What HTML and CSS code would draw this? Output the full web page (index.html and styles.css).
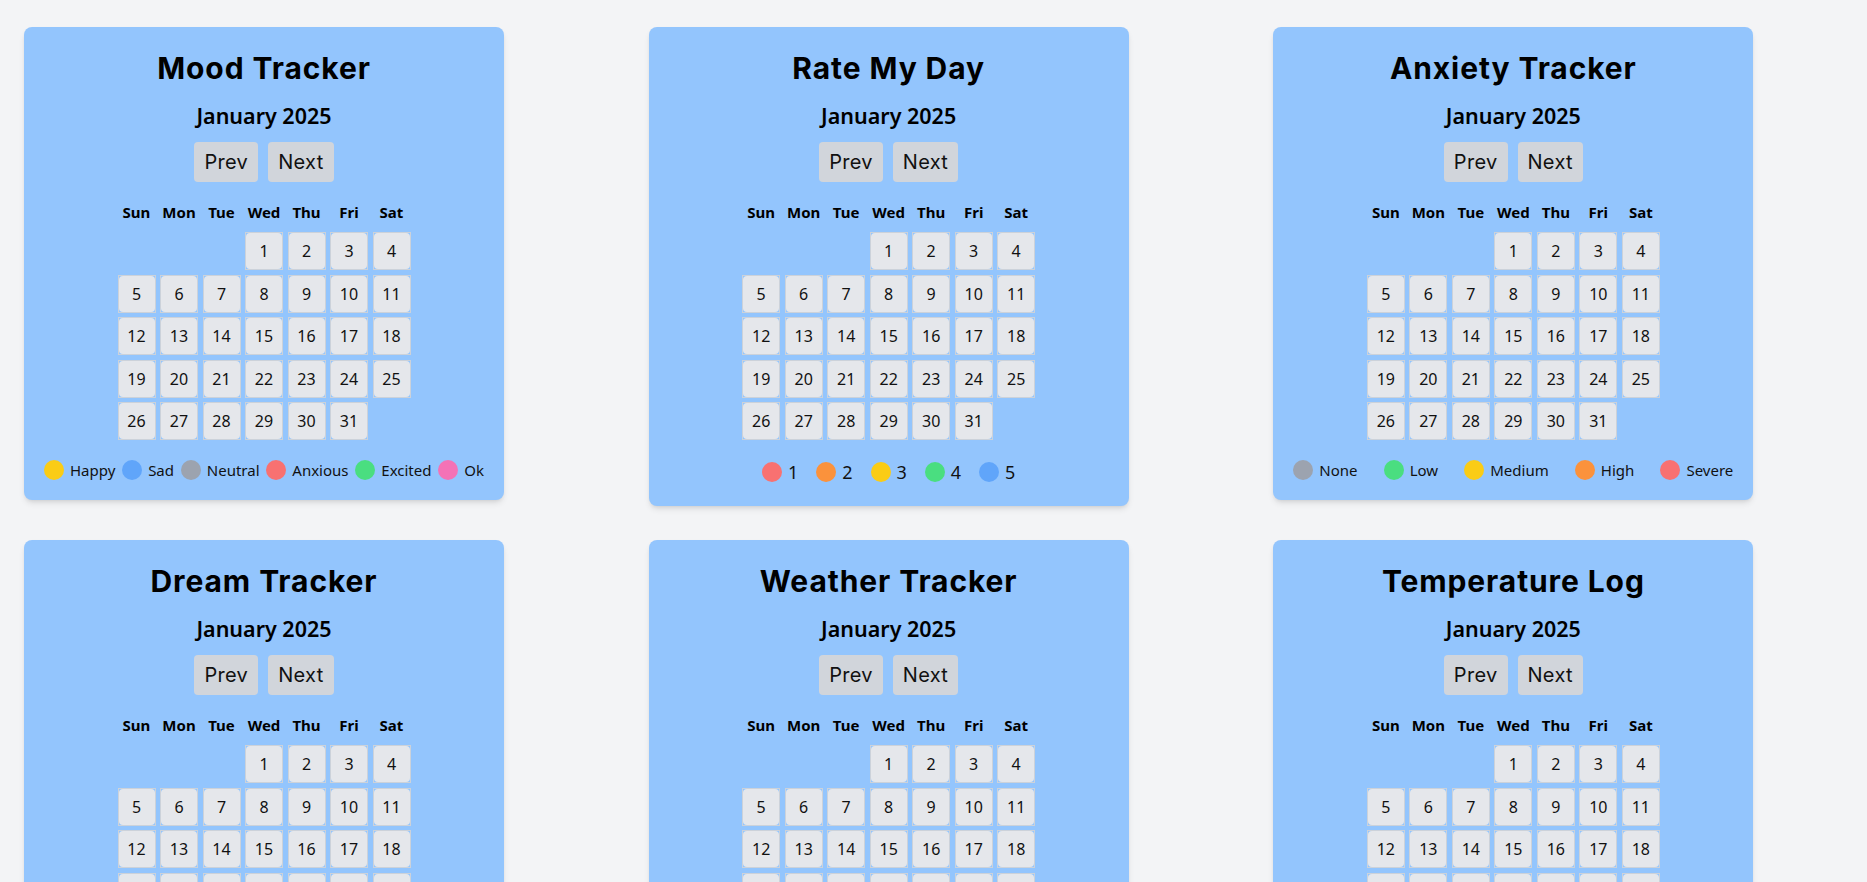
FILE: index.html
```html
<!DOCTYPE html>
<html lang="en">
<head>
<meta charset="utf-8">
<title>Trackers</title>
<link rel="stylesheet" href="styles.css">
</head>
<body>
<main class="board">

  <section class="card">
    <h1 class="card-title">Mood Tracker</h1>
    <h2 class="month">January 2025</h2>
    <div class="nav"><button class="nav-btn">Prev</button><button class="nav-btn">Next</button></div>
    <div class="weekdays"><span>Sun</span><span>Mon</span><span>Tue</span><span>Wed</span><span>Thu</span><span>Fri</span><span>Sat</span></div>
    <div class="days">
      <i class="blank"></i><i class="blank"></i><i class="blank"></i>
      <div class="day"><span>1</span></div><div class="day"><span>2</span></div><div class="day"><span>3</span></div><div class="day"><span>4</span></div>
      <div class="day"><span>5</span></div><div class="day"><span>6</span></div><div class="day"><span>7</span></div><div class="day"><span>8</span></div><div class="day"><span>9</span></div><div class="day"><span>10</span></div><div class="day"><span>11</span></div>
      <div class="day"><span>12</span></div><div class="day"><span>13</span></div><div class="day"><span>14</span></div><div class="day"><span>15</span></div><div class="day"><span>16</span></div><div class="day"><span>17</span></div><div class="day"><span>18</span></div>
      <div class="day"><span>19</span></div><div class="day"><span>20</span></div><div class="day"><span>21</span></div><div class="day"><span>22</span></div><div class="day"><span>23</span></div><div class="day"><span>24</span></div><div class="day"><span>25</span></div>
      <div class="day"><span>26</span></div><div class="day"><span>27</span></div><div class="day"><span>28</span></div><div class="day"><span>29</span></div><div class="day"><span>30</span></div><div class="day"><span>31</span></div>
    </div>
    <div class="legend legend-spread">
      <div class="key"><i class="dot yellow"></i>Happy</div>
      <div class="key"><i class="dot blue"></i>Sad</div>
      <div class="key"><i class="dot gray"></i>Neutral</div>
      <div class="key"><i class="dot red"></i>Anxious</div>
      <div class="key"><i class="dot green"></i>Excited</div>
      <div class="key"><i class="dot pink"></i>Ok</div>
    </div>
  </section>

  <section class="card">
    <h1 class="card-title">Rate My Day</h1>
    <h2 class="month">January 2025</h2>
    <div class="nav"><button class="nav-btn">Prev</button><button class="nav-btn">Next</button></div>
    <div class="weekdays"><span>Sun</span><span>Mon</span><span>Tue</span><span>Wed</span><span>Thu</span><span>Fri</span><span>Sat</span></div>
    <div class="days">
      <i class="blank"></i><i class="blank"></i><i class="blank"></i>
      <div class="day"><span>1</span></div><div class="day"><span>2</span></div><div class="day"><span>3</span></div><div class="day"><span>4</span></div>
      <div class="day"><span>5</span></div><div class="day"><span>6</span></div><div class="day"><span>7</span></div><div class="day"><span>8</span></div><div class="day"><span>9</span></div><div class="day"><span>10</span></div><div class="day"><span>11</span></div>
      <div class="day"><span>12</span></div><div class="day"><span>13</span></div><div class="day"><span>14</span></div><div class="day"><span>15</span></div><div class="day"><span>16</span></div><div class="day"><span>17</span></div><div class="day"><span>18</span></div>
      <div class="day"><span>19</span></div><div class="day"><span>20</span></div><div class="day"><span>21</span></div><div class="day"><span>22</span></div><div class="day"><span>23</span></div><div class="day"><span>24</span></div><div class="day"><span>25</span></div>
      <div class="day"><span>26</span></div><div class="day"><span>27</span></div><div class="day"><span>28</span></div><div class="day"><span>29</span></div><div class="day"><span>30</span></div><div class="day"><span>31</span></div>
    </div>
    <div class="legend legend-rating">
      <div class="key"><i class="dot red"></i>1</div>
      <div class="key"><i class="dot orange"></i>2</div>
      <div class="key"><i class="dot yellow"></i>3</div>
      <div class="key"><i class="dot green"></i>4</div>
      <div class="key"><i class="dot blue"></i>5</div>
    </div>
  </section>

  <section class="card">
    <h1 class="card-title">Anxiety Tracker</h1>
    <h2 class="month">January 2025</h2>
    <div class="nav"><button class="nav-btn">Prev</button><button class="nav-btn">Next</button></div>
    <div class="weekdays"><span>Sun</span><span>Mon</span><span>Tue</span><span>Wed</span><span>Thu</span><span>Fri</span><span>Sat</span></div>
    <div class="days">
      <i class="blank"></i><i class="blank"></i><i class="blank"></i>
      <div class="day"><span>1</span></div><div class="day"><span>2</span></div><div class="day"><span>3</span></div><div class="day"><span>4</span></div>
      <div class="day"><span>5</span></div><div class="day"><span>6</span></div><div class="day"><span>7</span></div><div class="day"><span>8</span></div><div class="day"><span>9</span></div><div class="day"><span>10</span></div><div class="day"><span>11</span></div>
      <div class="day"><span>12</span></div><div class="day"><span>13</span></div><div class="day"><span>14</span></div><div class="day"><span>15</span></div><div class="day"><span>16</span></div><div class="day"><span>17</span></div><div class="day"><span>18</span></div>
      <div class="day"><span>19</span></div><div class="day"><span>20</span></div><div class="day"><span>21</span></div><div class="day"><span>22</span></div><div class="day"><span>23</span></div><div class="day"><span>24</span></div><div class="day"><span>25</span></div>
      <div class="day"><span>26</span></div><div class="day"><span>27</span></div><div class="day"><span>28</span></div><div class="day"><span>29</span></div><div class="day"><span>30</span></div><div class="day"><span>31</span></div>
    </div>
    <div class="legend legend-spread">
      <div class="key"><i class="dot gray"></i>None</div>
      <div class="key"><i class="dot green"></i>Low</div>
      <div class="key"><i class="dot yellow"></i>Medium</div>
      <div class="key"><i class="dot orange"></i>High</div>
      <div class="key"><i class="dot red"></i>Severe</div>
    </div>
  </section>

  <section class="card">
    <h1 class="card-title">Dream Tracker</h1>
    <h2 class="month">January 2025</h2>
    <div class="nav"><button class="nav-btn">Prev</button><button class="nav-btn">Next</button></div>
    <div class="weekdays"><span>Sun</span><span>Mon</span><span>Tue</span><span>Wed</span><span>Thu</span><span>Fri</span><span>Sat</span></div>
    <div class="days">
      <i class="blank"></i><i class="blank"></i><i class="blank"></i>
      <div class="day"><span>1</span></div><div class="day"><span>2</span></div><div class="day"><span>3</span></div><div class="day"><span>4</span></div>
      <div class="day"><span>5</span></div><div class="day"><span>6</span></div><div class="day"><span>7</span></div><div class="day"><span>8</span></div><div class="day"><span>9</span></div><div class="day"><span>10</span></div><div class="day"><span>11</span></div>
      <div class="day"><span>12</span></div><div class="day"><span>13</span></div><div class="day"><span>14</span></div><div class="day"><span>15</span></div><div class="day"><span>16</span></div><div class="day"><span>17</span></div><div class="day"><span>18</span></div>
      <div class="day"><span>19</span></div><div class="day"><span>20</span></div><div class="day"><span>21</span></div><div class="day"><span>22</span></div><div class="day"><span>23</span></div><div class="day"><span>24</span></div><div class="day"><span>25</span></div>
      <div class="day"><span>26</span></div><div class="day"><span>27</span></div><div class="day"><span>28</span></div><div class="day"><span>29</span></div><div class="day"><span>30</span></div><div class="day"><span>31</span></div>
    </div>
    <div class="legend legend-spread">
      <div class="key"><i class="dot gray"></i>None</div>
      <div class="key"><i class="dot blue"></i>Normal</div>
      <div class="key"><i class="dot green"></i>Lucid</div>
      <div class="key"><i class="dot red"></i>Nightmare</div>
    </div>
  </section>

  <section class="card">
    <h1 class="card-title">Weather Tracker</h1>
    <h2 class="month">January 2025</h2>
    <div class="nav"><button class="nav-btn">Prev</button><button class="nav-btn">Next</button></div>
    <div class="weekdays"><span>Sun</span><span>Mon</span><span>Tue</span><span>Wed</span><span>Thu</span><span>Fri</span><span>Sat</span></div>
    <div class="days">
      <i class="blank"></i><i class="blank"></i><i class="blank"></i>
      <div class="day"><span>1</span></div><div class="day"><span>2</span></div><div class="day"><span>3</span></div><div class="day"><span>4</span></div>
      <div class="day"><span>5</span></div><div class="day"><span>6</span></div><div class="day"><span>7</span></div><div class="day"><span>8</span></div><div class="day"><span>9</span></div><div class="day"><span>10</span></div><div class="day"><span>11</span></div>
      <div class="day"><span>12</span></div><div class="day"><span>13</span></div><div class="day"><span>14</span></div><div class="day"><span>15</span></div><div class="day"><span>16</span></div><div class="day"><span>17</span></div><div class="day"><span>18</span></div>
      <div class="day"><span>19</span></div><div class="day"><span>20</span></div><div class="day"><span>21</span></div><div class="day"><span>22</span></div><div class="day"><span>23</span></div><div class="day"><span>24</span></div><div class="day"><span>25</span></div>
      <div class="day"><span>26</span></div><div class="day"><span>27</span></div><div class="day"><span>28</span></div><div class="day"><span>29</span></div><div class="day"><span>30</span></div><div class="day"><span>31</span></div>
    </div>
    <div class="legend legend-spread">
      <div class="key"><i class="dot yellow"></i>Sunny</div>
      <div class="key"><i class="dot gray"></i>Cloudy</div>
      <div class="key"><i class="dot blue"></i>Rainy</div>
      <div class="key"><i class="dot pink"></i>Snowy</div>
    </div>
  </section>

  <section class="card">
    <h1 class="card-title">Temperature Log</h1>
    <h2 class="month">January 2025</h2>
    <div class="nav"><button class="nav-btn">Prev</button><button class="nav-btn">Next</button></div>
    <div class="weekdays"><span>Sun</span><span>Mon</span><span>Tue</span><span>Wed</span><span>Thu</span><span>Fri</span><span>Sat</span></div>
    <div class="days">
      <i class="blank"></i><i class="blank"></i><i class="blank"></i>
      <div class="day"><span>1</span></div><div class="day"><span>2</span></div><div class="day"><span>3</span></div><div class="day"><span>4</span></div>
      <div class="day"><span>5</span></div><div class="day"><span>6</span></div><div class="day"><span>7</span></div><div class="day"><span>8</span></div><div class="day"><span>9</span></div><div class="day"><span>10</span></div><div class="day"><span>11</span></div>
      <div class="day"><span>12</span></div><div class="day"><span>13</span></div><div class="day"><span>14</span></div><div class="day"><span>15</span></div><div class="day"><span>16</span></div><div class="day"><span>17</span></div><div class="day"><span>18</span></div>
      <div class="day"><span>19</span></div><div class="day"><span>20</span></div><div class="day"><span>21</span></div><div class="day"><span>22</span></div><div class="day"><span>23</span></div><div class="day"><span>24</span></div><div class="day"><span>25</span></div>
      <div class="day"><span>26</span></div><div class="day"><span>27</span></div><div class="day"><span>28</span></div><div class="day"><span>29</span></div><div class="day"><span>30</span></div><div class="day"><span>31</span></div>
    </div>
    <div class="legend legend-spread">
      <div class="key"><i class="dot blue"></i>Cold</div>
      <div class="key"><i class="dot green"></i>Mild</div>
      <div class="key"><i class="dot orange"></i>Warm</div>
      <div class="key"><i class="dot red"></i>Hot</div>
    </div>
  </section>

</main>
</body>
</html>
```

FILE: styles.css
```css
* {
  box-sizing: border-box;
}

html, body {
  margin: 0;
  padding: 0;
  background: #f3f4f6;
}

body {
  font-family: "Noto Sans", "Open Sans", sans-serif;
  color: #000;
}

.board {
  display: grid;
  grid-template-columns: repeat(3, minmax(0, 1fr));
  column-gap: 32px;
  row-gap: 34px;
  align-items: start;
  padding: 27px 1px 40px 24px;
}

.card {
  width: 480px;
  background: #93c5fd;
  border-radius: 8px;
  box-shadow: 0 4px 6px -1px rgba(0, 0, 0, 0.1), 0 2px 4px -2px rgba(0, 0, 0, 0.1);
  padding: 23px 20px 18px;
  display: flex;
  flex-direction: column;
  align-items: center;
}

.card-title {
  margin: 0;
  font-family: Inter, "Noto Sans", sans-serif;
  font-weight: 700;
  font-size: 30px;
  line-height: 36px;
  letter-spacing: 0.9px;
  text-align: center;
}

.month {
  margin: 16px 0 0;
  font-weight: 600;
  font-size: 21.5px;
  line-height: 28px;
  text-align: center;
}

.nav {
  display: flex;
  gap: 10px;
  margin-top: 12px;
}

.nav-btn {
  font-family: Inter, "Noto Sans", sans-serif;
  font-size: 20px;
  line-height: 24px;
  color: #111;
  background: #d1d5db;
  border: none;
  border-radius: 4px;
  height: 40px;
  padding: 0 10px;
  letter-spacing: 0.3px;
}

.weekdays,
.days {
  display: grid;
  grid-template-columns: repeat(7, 38px);
  column-gap: 4.5px;
}

.weekdays {
  margin-top: 18px;
  font-weight: 700;
  font-size: 15px;
  line-height: 24px;
  text-align: center;
}

.days {
  margin-top: 8px;
  grid-auto-rows: 38px;
  row-gap: 4.5px;
}

.day {
  display: flex;
  border: 1px solid #ccd2da;
}

.day span {
  flex: 1;
  display: flex;
  align-items: center;
  justify-content: center;
  background: #e5e7eb;
  border-radius: 4px;
  font-size: 16px;
  color: #111;
}

.legend {
  margin-top: 18px;
  display: flex;
  align-items: center;
  line-height: 24px;
}

.legend-spread {
  width: 100%;
  justify-content: space-between;
  font-size: 15px;
  color: #111;
}

.legend-rating {
  justify-content: center;
  gap: 18px;
  font-size: 18px;
  line-height: 28px;
  margin-bottom: 2px;
  color: #111;
}

.key {
  display: flex;
  align-items: center;
  gap: 6px;
}

.dot {
  display: block;
  width: 20px;
  height: 20px;
  border-radius: 50%;
}

.yellow { background: #facc15; }
.blue { background: #60a5fa; }
.gray { background: #9ca3af; }
.red { background: #f87171; }
.green { background: #4ade80; }
.pink { background: #f472b6; }
.orange { background: #fb923c; }
```
